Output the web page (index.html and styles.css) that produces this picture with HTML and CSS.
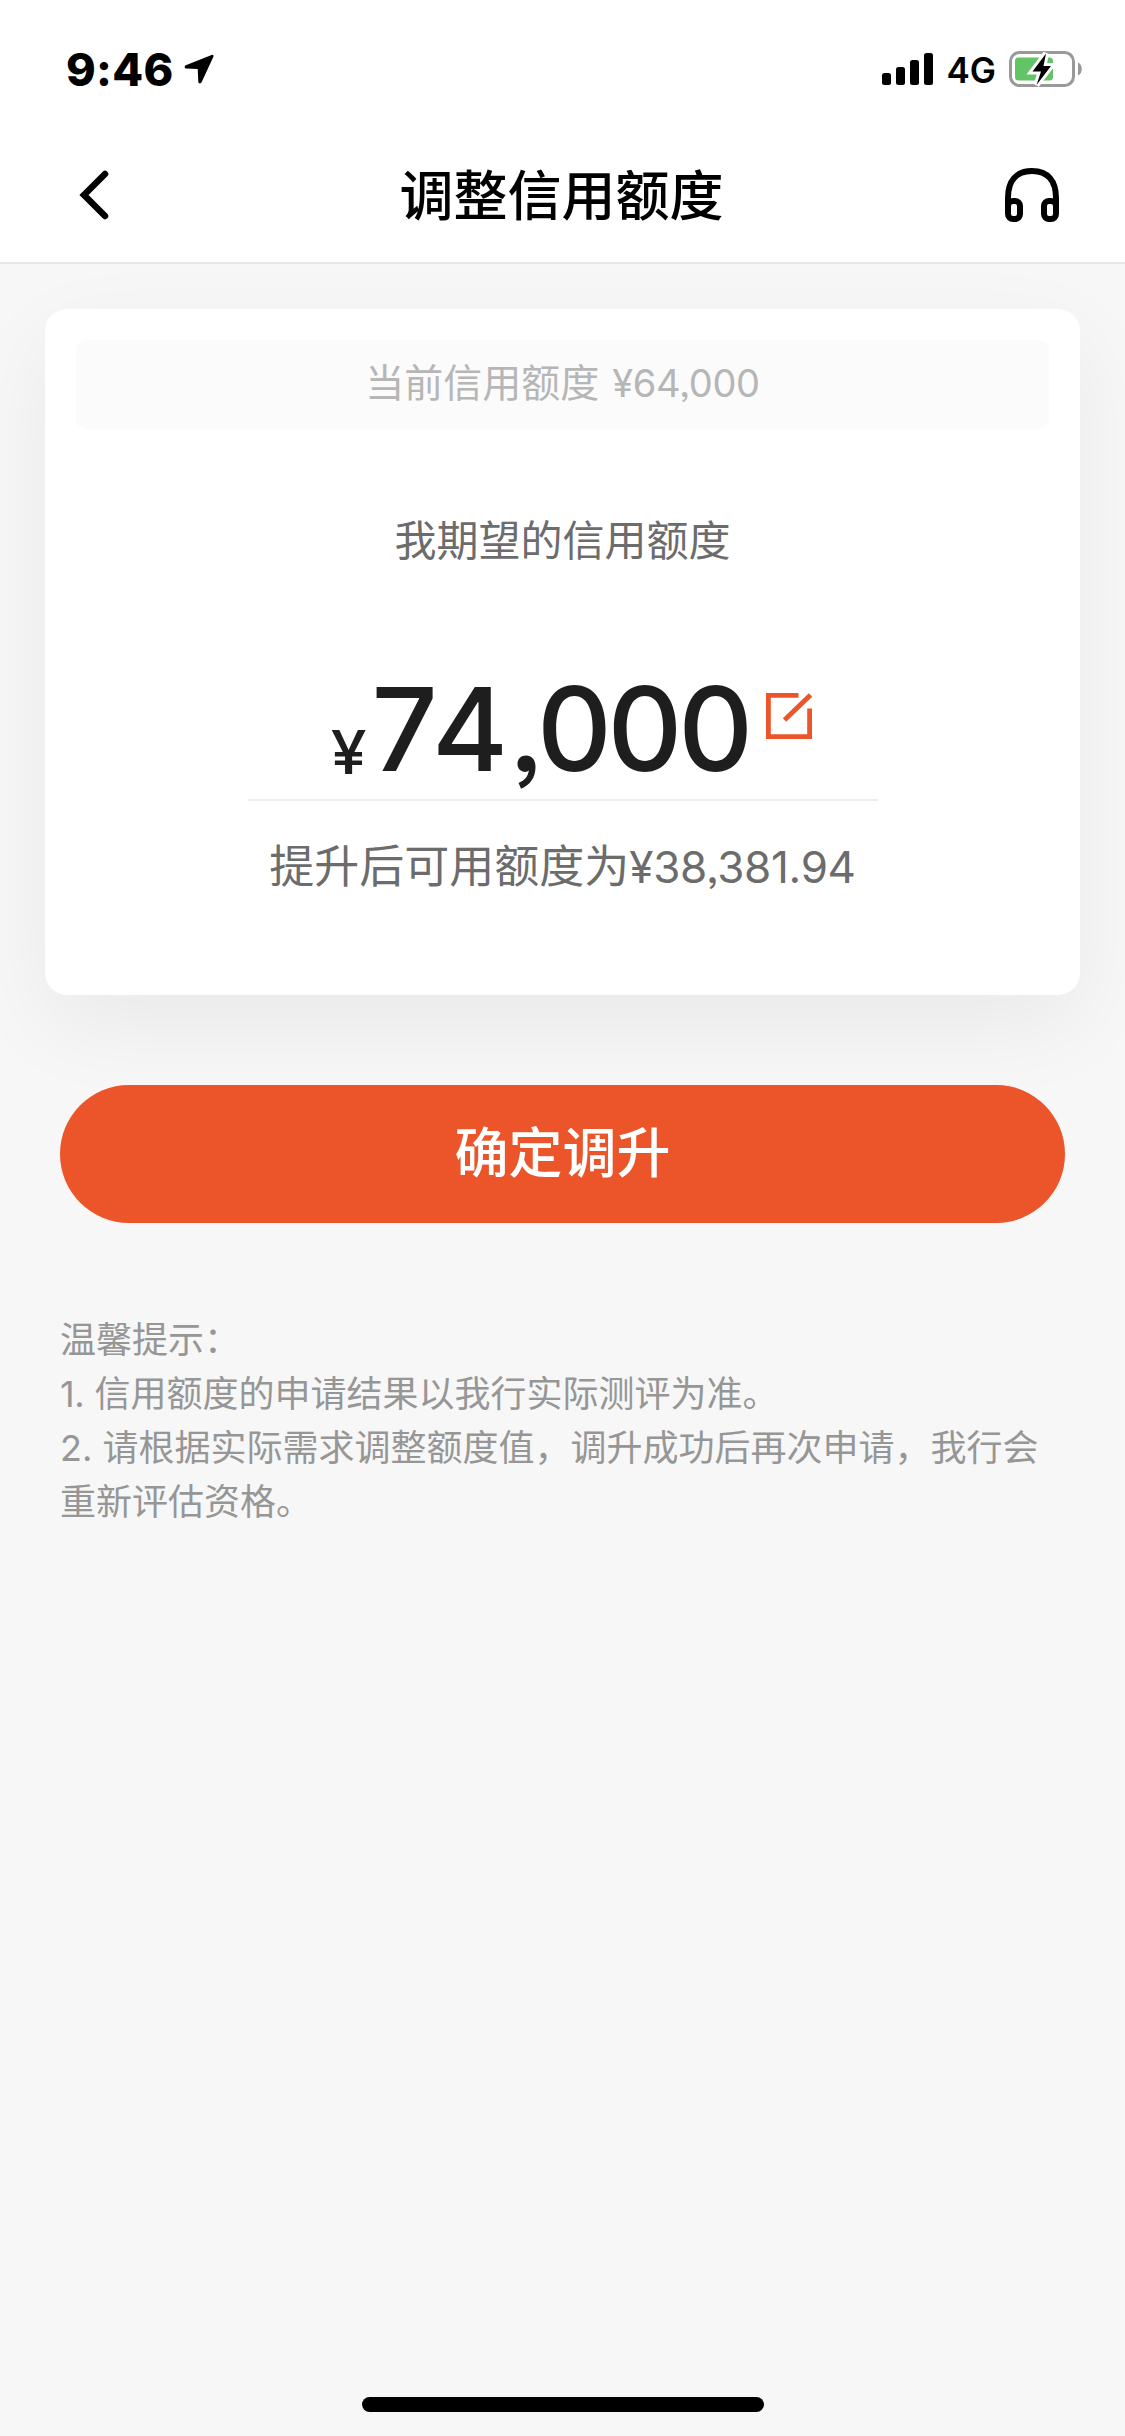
FILE: index.html
```html
<!DOCTYPE html>
<html lang="zh-CN">
<head>
<meta charset="utf-8">
<title>调整信用额度</title>
<link rel="stylesheet" href="styles.css">
</head>
<body>
<div class="screen">
  <header class="header">
    <div class="status">
      <div class="status-left">
        <span class="clock">9:46</span>
        <svg class="location" width="30" height="30" viewBox="0 0 30 30"><path d="M27.6 1 1.8 11.2c-1.7.8-1.3 3.3.5 3.4l11.4.5.6 12.6c.1 2 2.6 2.300 3.300.6L29.400 2.800C29.900 1.500 28.900.5 27.600 1Z"/></svg>
      </div>
      <div class="status-right">
        <svg class="signal" width="51" height="32" viewBox="0 0 51 32"><rect y="20" width="9" height="12" rx="2.500"/><rect x="14" y="14" width="9" height="18" rx="2.500"/><rect x="28" y="7" width="9" height="25" rx="2.500"/><rect x="42" width="9" height="32" rx="2.500"/></svg>
        <span class="network">4G</span>
        <svg class="battery" width="74" height="36" viewBox="0 0 74 36">
          <rect x="1.500" y="1.500" width="63" height="33" rx="9" fill="none" stroke="#999" stroke-width="3"/>
          <path d="M69 11.500c5 1.500 5 11.500 0 13Z" fill="#999"/>
          <rect x="6" y="6.500" width="38" height="23" rx="3.500" fill="#62c466"/>
          <path d="M37 2.500 23.500 20.500h8.500L27.500 34 42 15h-7.500Z" fill="#000" stroke="#fff" stroke-width="6" paint-order="stroke"/>
        </svg>
      </div>
    </div>
    <nav class="navbar">
      <svg class="back" width="32" height="50" viewBox="0 0 32 50"><path d="M28 4 7 25l21 21" fill="none" stroke="#000" stroke-width="6.500" stroke-linecap="round"/></svg>
      <h1 class="title">调整信用额度</h1>
      <svg class="service" width="54" height="54" viewBox="0 0 54 54"><g fill="none" stroke="#000" stroke-width="6"><path d="M3 42V30C3 13 11 3 27 3s24 10 24 27v12"/><rect x="3" y="33" width="12" height="18" rx="5"/><rect x="39" y="33" width="12" height="18" rx="5"/></g></svg>
    </nav>
  </header>

  <main class="content">
    <section class="card">
      <p class="current">当前信用额度 <span class="num">¥64,000</span></p>
      <p class="label">我期望的信用额度</p>
      <div class="amount">
        <span class="currency">¥</span>
        <span class="value"><span class="thousands">74</span>,000</span>
        <svg class="edit" width="46" height="46" viewBox="0 0 46 46"><g fill="none" stroke="#eb5529" stroke-width="4.800"><path d="M32.500 2.400H2.400v41.200h41.200V15.500"/><path d="M18.500 27 44.500 2"/></g></svg>
      </div>
      <p class="available">提升后可用额度为<span class="num">¥38,381.94</span></p>
    </section>

    <button class="submit" type="button">确定调升</button>

    <section class="tips">
      <p>温馨提示：</p>
      <p><span class="index">1.</span> 信用额度的申请结果以我行实际测评为准。</p>
      <p>2. 请根据实际需求调整额度值，调升成功后再次申请，我行会重新评估资格。</p>
    </section>
  </main>

  <div class="home-bar"></div>
</div>
</body>
</html>
```
FILE: styles.css
```css
* { box-sizing: border-box; margin: 0; padding: 0; }

body {
  font-family: Inter, "Noto Sans CJK SC", sans-serif;
  font-feature-settings: "ss03";
  background: #f7f7f7;
}

.screen {
  display: flex;
  flex-direction: column;
  width: 1125px;
  height: 2436px;
  overflow: hidden;
  background: #f7f7f7;
}

.header {
  position: relative;
  z-index: 1;
  height: 264px;
  background: #fff;
  border-bottom: 2px solid #e8e8e8;
}

.status {
  display: flex;
  justify-content: space-between;
  height: 132px;
  padding: 0 42px 0 66px;
}

.status-left, .status-right { display: flex; height: 138px; align-items: center; }
.clock { font-size: 45px; font-weight: 800; line-height: 1; letter-spacing: 0.3px; }
.location { margin-left: 10px; }
.network { margin: 3px 13px 0 13px; font-size: 35px; font-weight: 600; line-height: 1; }

.navbar {
  display: flex;
  align-items: center;
  justify-content: space-between;
  height: 126px;
  padding: 0 66px 0 77px;
}

.back { margin-right: 9px; }
.title { padding-top: 3px; font-size: 54px; font-weight: 500; line-height: 80px; }

.content { display: flex; flex-direction: column; padding: 45px 45px 0; }

.card {
  display: flex;
  flex-direction: column;
  align-items: center;
  height: 686px;
  padding: 31px 31px 0;
  background: #fff;
  border-radius: 22px;
  box-shadow: 0 30px 90px rgba(0, 0, 0, 0.06);
}

.current {
  width: 100%;
  height: 89px;
  line-height: 85px;
  text-align: center;
  font-size: 39px;
  font-weight: 400;
  word-spacing: 2px;
  color: #b6b6b6;
  background: #fbfbfb;
  border-radius: 10px;
}

.current .num { font-size: 38px; letter-spacing: -0.3px; }

.label {
  margin-top: 82px;
  line-height: 60px;
  font-size: 42px;
  font-weight: 400;
  color: #6c6c6c;
}

.amount {
  display: flex;
  align-items: baseline;
  justify-content: center;
  width: 630px;
  height: 230px;
  padding: 88px 0 0 19px;
  border-bottom: 2px solid #ededed;
  color: #1e1e1e;
  font-weight: 500;
  line-height: 140px;
}

.currency { position: relative; top: 3px; font-size: 60px; transform: scaleX(1.07); }
.value {
  margin-left: 6px;
  font-size: 116px;
  letter-spacing: -4.2px;
}
.thousands { letter-spacing: 1px; }
.edit { align-self: flex-start; margin: 34px 0 0 17px; }

.available {
  margin-top: 33px;
  line-height: 66px;
  font-size: 45px;
  font-weight: 400;
  color: #6c6c6c;
}

.available .num { font-size: 44px; letter-spacing: -0.3px; }

.submit {
  height: 138px;
  margin: 90px 15px 0;
  padding-bottom: 9px;
  border: 0;
  border-radius: 69px;
  background: #eb5529;
  color: #fff;
  font: inherit;
  font-size: 54px;
  font-weight: 500;
}

.tips {
  margin: 90px 15px 0;
  font-size: 36px;
  font-weight: 400;
  line-height: 54px;
  color: #969696;
}

.index { letter-spacing: -0.3px; }

.home-bar {
  width: 402px;
  height: 15px;
  margin: auto auto 24px;
  border-radius: 8px;
  background: #000;
}
```
